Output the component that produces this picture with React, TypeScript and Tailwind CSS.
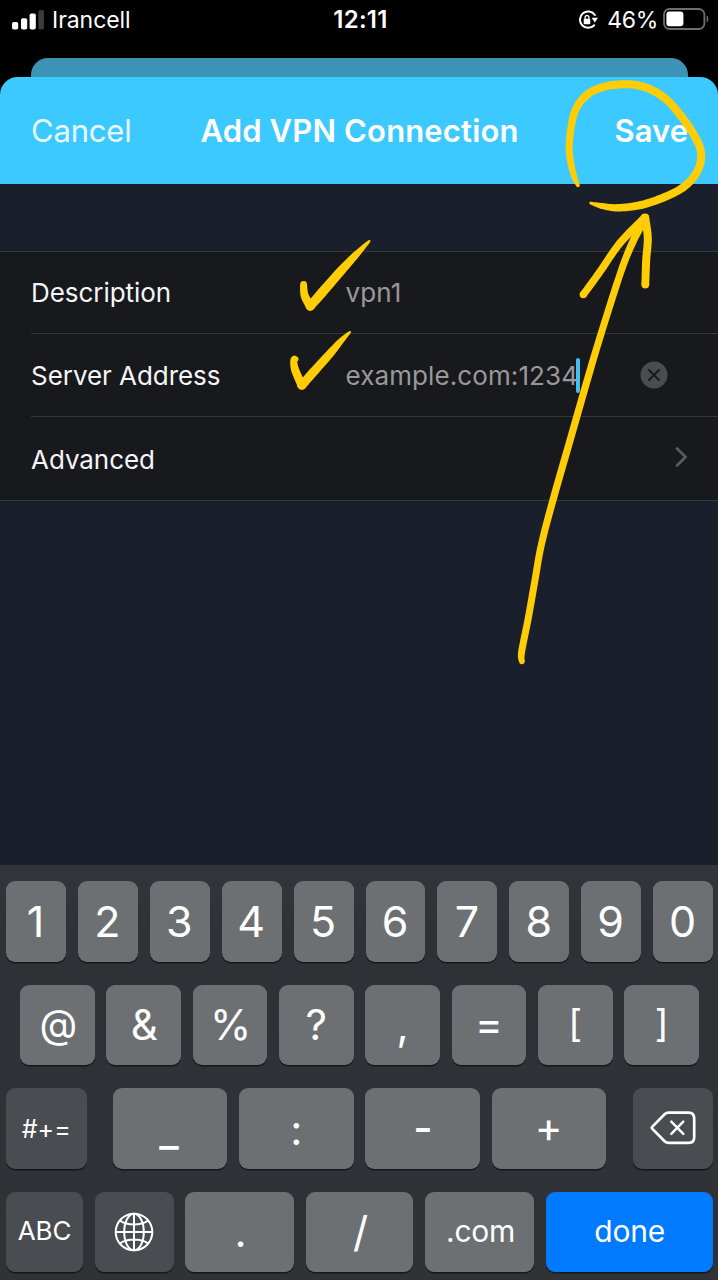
import type { ReactNode } from 'react';

type Point = [x: number, y: number, width: number];

const INK = '#ffcd05';

function spline(a: number, b: number, c: number, d: number, t: number) {
  return 0.5 * (2 * b + (c - a) * t + (2 * a - 5 * b + 4 * c - d) * t * t + (3 * b - a - 3 * c + d) * t * t * t);
}

/** Outline of a pen stroke that changes width along a smooth curve. */
function penOutline(points: Point[]) {
  const samples: Point[] = [];
  for (let i = 0; i < points.length - 1; i++) {
    const p0 = points[Math.max(i - 1, 0)];
    const p1 = points[i];
    const p2 = points[i + 1];
    const p3 = points[Math.min(i + 2, points.length - 1)];
    for (let s = 0; s < 8; s++) {
      const t = s / 8;
      samples.push([
        spline(p0[0], p1[0], p2[0], p3[0], t),
        spline(p0[1], p1[1], p2[1], p3[1], t),
        p1[2] + (p2[2] - p1[2]) * t,
      ]);
    }
  }
  samples.push(points[points.length - 1]);
  const left: string[] = [];
  const right: string[] = [];
  samples.forEach(([x, y, w], i) => {
    const a = samples[Math.max(i - 1, 0)];
    const b = samples[Math.min(i + 1, samples.length - 1)];
    const dx = b[0] - a[0];
    const dy = b[1] - a[1];
    const len = Math.hypot(dx, dy) || 1;
    const nx = (-dy / len) * (w / 2);
    const ny = (dx / len) * (w / 2);
    left.push(`${(x + nx).toFixed(2)},${(y + ny).toFixed(2)}`);
    right.unshift(`${(x - nx).toFixed(2)},${(y - ny).toFixed(2)}`);
  });
  return `M${[...left, ...right].join('L')}Z`;
}

function PenStroke({ points }: { points: Point[] }) {
  const first = points[0];
  const last = points[points.length - 1];
  return (
    <g fill={INK}>
      <path d={penOutline(points)} />
      <circle cx={first[0]} cy={first[1]} r={first[2] / 2} />
      <circle cx={last[0]} cy={last[1]} r={last[2] / 2} />
    </g>
  );
}

const STROKES: Point[][] = [
  // ring around Save
  [
    [578, 185.5, 3.5], [574, 176, 6], [570.5, 161, 7], [569.3, 143, 7], [574, 114, 7.5], [585, 96.5, 8], [602, 87.3, 8],
    [624.7, 84.2, 8], [645, 87.2, 8], [664, 97.5, 8], [679.5, 114, 8], [694, 135, 8], [701, 152.5, 8], [698, 170, 8],
    [685, 186, 8], [664.7, 197, 8], [641, 205, 8], [618, 207.8, 7.5], [602, 206, 6], [590.5, 203, 2.5],
  ],
  // arrow
  [
    [645.2, 218, 8], [633.2, 241, 7.5], [621.5, 270, 7], [601.7, 331.7, 7], [587.3, 380, 7.2], [573, 430, 7.2],
    [553, 500, 7.2], [541.3, 545, 7], [535, 580, 7], [528.3, 618, 7], [521.6, 652, 7],
    [521.9, 661.5, 5.5],
  ],
  [[583.3, 294.6, 7.4], [600, 271.7, 7.4], [620, 243, 7.6], [645, 217.5, 8]],
  [[645.2, 218, 8], [647.8, 238, 8], [646.2, 260, 8], [645.3, 284.5, 7.8]],
  // first tick
  [[303.6, 284.5, 6.8], [304.6, 295.5, 8], [310.2, 306, 9]],
  [[310.2, 306.2, 9], [321.7, 293, 9.6], [340, 272, 9.2], [356.7, 254, 6.8], [369.4, 241, 2.2]],
  // second tick
  [[296, 359, 5], [293.8, 359.5, 6.6], [295, 369.5, 8], [301.8, 385.2, 8.8]],
  [[301.8, 385.4, 8.8], [313, 372.6, 9], [330, 353.6, 8.2], [341.5, 340.4, 5.8], [350, 332, 2.2]],
];

function Annotations() {
  return (
    <svg className="pointer-events-none absolute inset-0" width="718" height="1280" viewBox="0 0 718 1280">
      {STROKES.map((points, i) => (
        <PenStroke key={i} points={points} />
      ))}
    </svg>
  );
}

function StatusBar() {
  return (
    <div className="grid h-[58px] grid-cols-3 items-start pt-2 pl-3 pr-[9px] text-white">
      <div className="flex h-6 items-center">
        <svg width="32" height="21" viewBox="0 0 32 21" fill="#fff">
          <rect x="0" y="12" width="6.2" height="7.5" rx="1.8" />
          <rect x="9" y="8.2" width="6.2" height="11.3" rx="1.8" />
          <rect x="17.6" y="3.5" width="6.2" height="16" rx="1.8" />
          <rect x="26.4" y="0" width="5.6" height="19.5" rx="1.8" fill="#3b3b3b" />
        </svg>
        <span className="ml-2 text-[23px] leading-6 tracking-[-0.05px]">Irancell</span>
      </div>
      <div className="text-center text-[24px] font-semibold leading-6 tracking-[0.25px]">12:11</div>
      <div className="flex h-6 items-center justify-end whitespace-nowrap">
        <svg width="20" height="20" viewBox="0 0 20 20" fill="none">
          <path d="M16.9 5A8.2 8.2 0 1 0 16.2 15.2" stroke="#fff" strokeWidth="2" strokeLinecap="round" />
          <path d="M13.6 7.8h6.4l-3.2 4.8z" fill="#fff" />
          <rect x="5.7" y="8.8" width="6.6" height="5.4" rx="0.9" fill="#fff" />
          <path d="M7.1 9V7.4a1.9 1.9 0 0 1 3.8 0V9" stroke="#fff" strokeWidth="1.3" />
        </svg>
        <span className="ml-[9px] text-[23px] leading-6 tracking-[-0.3px]">46%</span>
        <svg className="-mt-[3px] ml-[5px]" width="46" height="22" viewBox="0 0 46 22" fill="none">
          <rect x="1" y="1" width="40.4" height="20" rx="5.5" stroke="#6e6e6e" strokeWidth="1.8" />
          <rect x="3.4" y="3.6" width="17" height="14.6" rx="3" fill="#fff" />
          <path d="M43.6 7.6c2.4 1 2.4 5.8 0 6.8z" fill="#6e6e6e" />
        </svg>
      </div>
    </div>
  );
}

function Row({ label, last, children }: { label: string; last?: boolean; children?: ReactNode }) {
  return (
    <div
      className={
        last
          ? 'flex flex-1 items-center pt-[2px] pr-[30px]'
          : 'flex h-[82.4px] shrink-0 items-center border-b border-[#33373c] pt-[0.5px] pr-[50px]'
      }
    >
      <div className="w-[314.5px] text-[26px] tracking-[-0.05px] text-[#f4f5f6]">{label}</div>
      <div className="flex flex-1 items-center text-[26px] tracking-[0.1px] text-[#98999c]">{children}</div>
    </div>
  );
}

function ClearIcon() {
  return (
    <svg className="ml-auto" width="28" height="28" viewBox="0 0 28 28">
      <circle cx="14" cy="14" r="13.5" fill="#4b4c50" />
      <path d="M9 9l10 10M19 9L9 19" stroke="#18191d" strokeWidth="2" strokeLinecap="round" />
    </svg>
  );
}

function Chevron() {
  return (
    <svg className="-mt-[4px] ml-auto" width="14" height="20" viewBox="0 0 14 20" fill="none">
      <path d="M3 1.5L11.6 10L3 18.5" stroke="#5b5c60" strokeWidth="2.6" strokeLinecap="round" strokeLinejoin="round" />
    </svg>
  );
}

function GlobeIcon() {
  return (
    <svg width="40" height="40" viewBox="0 0 40 40" fill="none" stroke="#fff" strokeWidth="2">
      <circle cx="20" cy="20" r="18.3" />
      <ellipse cx="20" cy="20" rx="9.8" ry="18.3" />
      <path d="M20 1.7v36.6M1.7 20h36.6M6 8.6c7.5 5.2 20.5 5.2 28 0M6 31.4c7.5-5.2 20.5-5.2 28 0" />
    </svg>
  );
}

function DeleteIcon() {
  return (
    <svg width="46" height="34" viewBox="0 0 46 34" fill="none" stroke="#fff" strokeLinecap="round" strokeLinejoin="round">
      <path
        d="M2.4 15.6L14.6 3.3Q16.3 1.6 18.6 1.6H38.5Q44.2 1.6 44.2 7.3V26.2Q44.2 31.9 38.5 31.9H18.6Q16.3 31.9 14.6 30.2L2.4 17.9Q1.3 16.75 2.4 15.6Z"
        strokeWidth="2.7"
      />
      <path d="M21.3 10.6L33.3 22.9M33.3 10.6L21.3 22.9" strokeWidth="2.4" />
    </svg>
  );
}

function Key({ className, children }: { className: string; children: ReactNode }) {
  return (
    <div
      className={`flex h-[80.5px] items-center justify-center rounded-[9px] leading-none text-white shadow-[0_1.5px_0.5px_#15171a] ${className}`}
    >
      {children}
    </div>
  );
}

const LIGHT = 'bg-[#6d7073]';
const DARK = 'bg-[#494c50]';

const SYMBOLS = [
  { label: '@', style: 'pl-[2px] pb-[3px] text-[39px]' },
  { label: '&', style: 'pl-px text-[42px]' },
  { label: '%', style: 'text-[42px] tracking-[-1px]' },
  { label: '?', style: 'text-[42px]' },
  { label: ',', style: 'text-[42px]' },
  { label: '=', style: 'pb-[2px] text-[42px]' },
  { label: '[', style: 'pb-[3px] text-[38px]' },
  { label: ']', style: 'pb-[3px] text-[38px]' },
];

function Keyboard() {
  return (
    <div className="flex h-[415px] flex-col gap-[23px] bg-linear-to-b from-[#32353c] via-[#2e3135] via-15% to-[#2f3336] pt-4 pl-[6px] pr-[5px]">
      <div className="flex gap-3">
        {['1', '2', '3', '4', '5', '6', '7', '8', '9', '0'].map((k) => (
          <Key key={k} className={`flex-1 pr-px text-[43px] ${LIGHT}`}>
            {k}
          </Key>
        ))}
      </div>
      <div className="grid grid-cols-8 gap-[11.5px] px-[14px]">
        {SYMBOLS.map(({ label, style }) => (
          <Key key={label} className={`${style} ${LIGHT}`}>
            {label}
          </Key>
        ))}
      </div>
      <div className="flex">
        <Key className={`w-[80.5px] pt-[2px] text-[25px] ${DARK}`}>#+=</Key>
        <Key className={`ml-[26.5px] w-[114px] pt-[6px] pr-[2px] text-[42px] font-medium ${LIGHT}`}>_</Key>
        <Key className={`ml-3 w-[114.5px] pt-[4px] text-[42px] ${LIGHT}`}>:</Key>
        <Key className={`ml-[11.5px] w-[115px] pl-px text-[42px] font-medium ${LIGHT}`}>-</Key>
        <Key className={`ml-[11.5px] w-[114.5px] pb-[2px] text-[42px] ${LIGHT}`}>+</Key>
        <Key className={`ml-auto w-[80.5px] ${DARK}`}>
          <DeleteIcon />
        </Key>
      </div>
      <div className="flex">
        <Key className={`w-[77px] pb-[2px] text-[26px] tracking-[-0.2px] ${DARK}`}>ABC</Key>
        <Key className={`ml-3 w-[78.5px] ${DARK}`}>
          <GlobeIcon />
        </Key>
        <Key className={`ml-[11.5px] w-[109px] pl-[2px] text-[42px] ${LIGHT}`}>.</Key>
        <Key className={`ml-3 w-[107px] pl-[2px] text-[42px] ${LIGHT}`}>/</Key>
        <Key className={`ml-3 w-[109px] pb-[2px] pl-[2px] text-[30px] tracking-[-0.3px] ${LIGHT}`}>.com</Key>
        <Key className="ml-auto w-[167.5px] bg-[#007aff] pb-[2px] pl-px text-[30px] tracking-[-0.2px]">done</Key>
      </div>
    </div>
  );
}

export default function App() {
  return (
    <div className="relative flex h-[1280px] w-[718px] flex-col overflow-hidden bg-black font-[Inter,sans-serif]">
      <StatusBar />
      <div className="mr-[30px] ml-[31px] h-[19px] rounded-t-[17px] bg-[#3b93b5]" />
      <div className="flex flex-1 flex-col overflow-hidden rounded-t-[18px] bg-[#19202c]">
        <div className="grid h-[107px] grid-cols-[150px_1fr_150px] items-center bg-[#3bc9ff] pt-[2px] pr-[30px] pl-[31px] text-[31px] text-white">
          <div className="tracking-[-0.2px] text-[#e9f9ff]">Cancel</div>
          <div className="text-center font-semibold tracking-[0.15px] whitespace-nowrap">Add VPN Connection</div>
          <div className="text-right font-semibold">Save</div>
        </div>
        <div className="mt-[67px] flex h-[250px] flex-col border-y border-[#33373c] bg-[#18191d] pl-[31px]">
          <Row label="Description">vpn1</Row>
          <Row label="Server Address">
            <span>example.com:1234</span>
            <span className="-ml-[2px] h-[35px] w-1 rounded-sm bg-[#43bff0]" />
            <ClearIcon />
          </Row>
          <Row label="Advanced" last>
            <Chevron />
          </Row>
        </div>
        <div className="flex-1" />
        <Keyboard />
      </div>
      <Annotations />
    </div>
  );
}
